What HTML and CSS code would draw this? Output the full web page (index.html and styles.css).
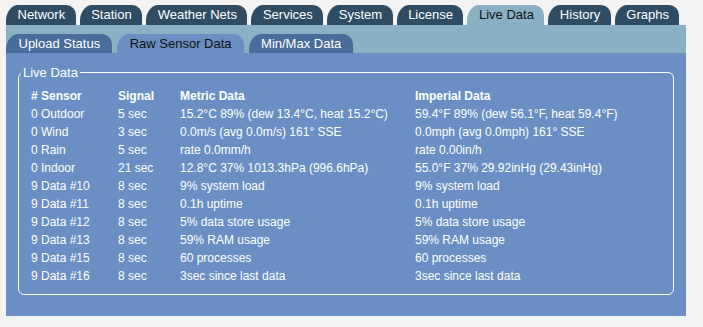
FILE: index.html
```html
<!DOCTYPE html>
<html lang="en">
<head>
    <meta charset="UTF-8">
    <title>Live Data</title>
    <link rel="stylesheet" href="styles.css">
</head>
<body>
    <div class="page">
        <div class="tabs">
            <span class="tab">Network</span>
            <span class="tab">Station</span>
            <span class="tab">Weather Nets</span>
            <span class="tab">Services</span>
            <span class="tab">System</span>
            <span class="tab">License</span>
            <span class="tab active">Live Data</span>
            <span class="tab">History</span>
            <span class="tab">Graphs</span>
        </div>
        <div class="subbar">
            <span class="subtab">Upload Status</span>
            <span class="subtab active">Raw Sensor Data</span>
            <span class="subtab">Min/Max Data</span>
        </div>
        <div class="panel">
            <fieldset class="live">
                <legend>Live Data</legend>
                <table class="sensors">
                    <tr><th># Sensor</th><th>Signal</th><th>Metric Data</th><th>Imperial Data</th></tr>
                    <tr><td>0 Outdoor</td><td>5 sec</td><td>15.2°C 89% (dew 13.4°C, heat 15.2°C)</td><td>59.4°F 89% (dew 56.1°F, heat 59.4°F)</td></tr>
                    <tr><td>0 Wind</td><td>3 sec</td><td>0.0m/s (avg 0.0m/s) 161° SSE</td><td>0.0mph (avg 0.0mph) 161° SSE</td></tr>
                    <tr><td>0 Rain</td><td>5 sec</td><td>rate 0.0mm/h</td><td>rate 0.00in/h</td></tr>
                    <tr><td>0 Indoor</td><td>21 sec</td><td>12.8°C 37% 1013.3hPa (996.6hPa)</td><td>55.0°F 37% 29.92inHg (29.43inHg)</td></tr>
                    <tr><td>9 Data #10</td><td>8 sec</td><td>9% system load</td><td>9% system load</td></tr>
                    <tr><td>9 Data #11</td><td>8 sec</td><td>0.1h uptime</td><td>0.1h uptime</td></tr>
                    <tr><td>9 Data #12</td><td>8 sec</td><td>5% data store usage</td><td>5% data store usage</td></tr>
                    <tr><td>9 Data #13</td><td>8 sec</td><td>59% RAM usage</td><td>59% RAM usage</td></tr>
                    <tr><td>9 Data #15</td><td>8 sec</td><td>60 processes</td><td>60 processes</td></tr>
                    <tr><td>9 Data #16</td><td>8 sec</td><td>3sec since last data</td><td>3sec since last data</td></tr>
                </table>
            </fieldset>
        </div>
    </div>
</body>
</html>
```

FILE: styles.css
```css
body {
    margin: 0;
    background-color: #f3f3f3;
    font-family: "Liberation Sans", Arial, sans-serif;
    font-size: 12px;
}
.page {
    width: 680px;
    padding: 5px 0 0 6px;
}
.tabs {
    display: flex;
    gap: 4px;
    height: 20px;
}
.tab {
    flex-shrink: 0;
    white-space: nowrap;
    background-color: #2f4c62;
    color: #fff;
    font-size: 13px;
    line-height: 20px;
    padding: 0 10.5px 0 11.5px;
    border-radius: 12px 10px 0 0 / 16px 10px 0 0;
}
.tab.active {
    background-color: #8ab0c4;
    color: #111;
}
.subbar {
    background-color: #8ab0c4;
    display: flex;
    gap: 5px;
    padding: 9px 0 0 0;
    height: 19px;
}
.subtab {
    flex-shrink: 0;
    white-space: nowrap;
    background-color: #4a6c9d;
    color: #fff;
    font-size: 13px;
    line-height: 19px;
    padding: 0 12px 0 12.5px;
    border-radius: 12px 10px 0 0 / 16px 10px 0 0;
}
.subtab.active {
    background-color: #6b8fc4;
    color: #111;
}
.panel {
    background-color: #6b8fc4;
    color: #fff;
    padding: 12px 12px 21px 12px;
}
.live {
    margin: 0;
    border: 1px solid #fff;
    border-radius: 6px;
    padding: 7px 12px 9px 12px;
}
.live legend {
    font-size: 13px;
    padding: 0 2px;
    margin-left: -10px;
}
.sensors {
    border-collapse: collapse;
}
.sensors th,
.sensors td {
    text-align: left;
    padding: 0;
    height: 18px;
    white-space: nowrap;
}
.sensors th:nth-child(1) { width: 87px; }
.sensors th:nth-child(2) { width: 62px; }
.sensors th:nth-child(3) { width: 235px; }
```
